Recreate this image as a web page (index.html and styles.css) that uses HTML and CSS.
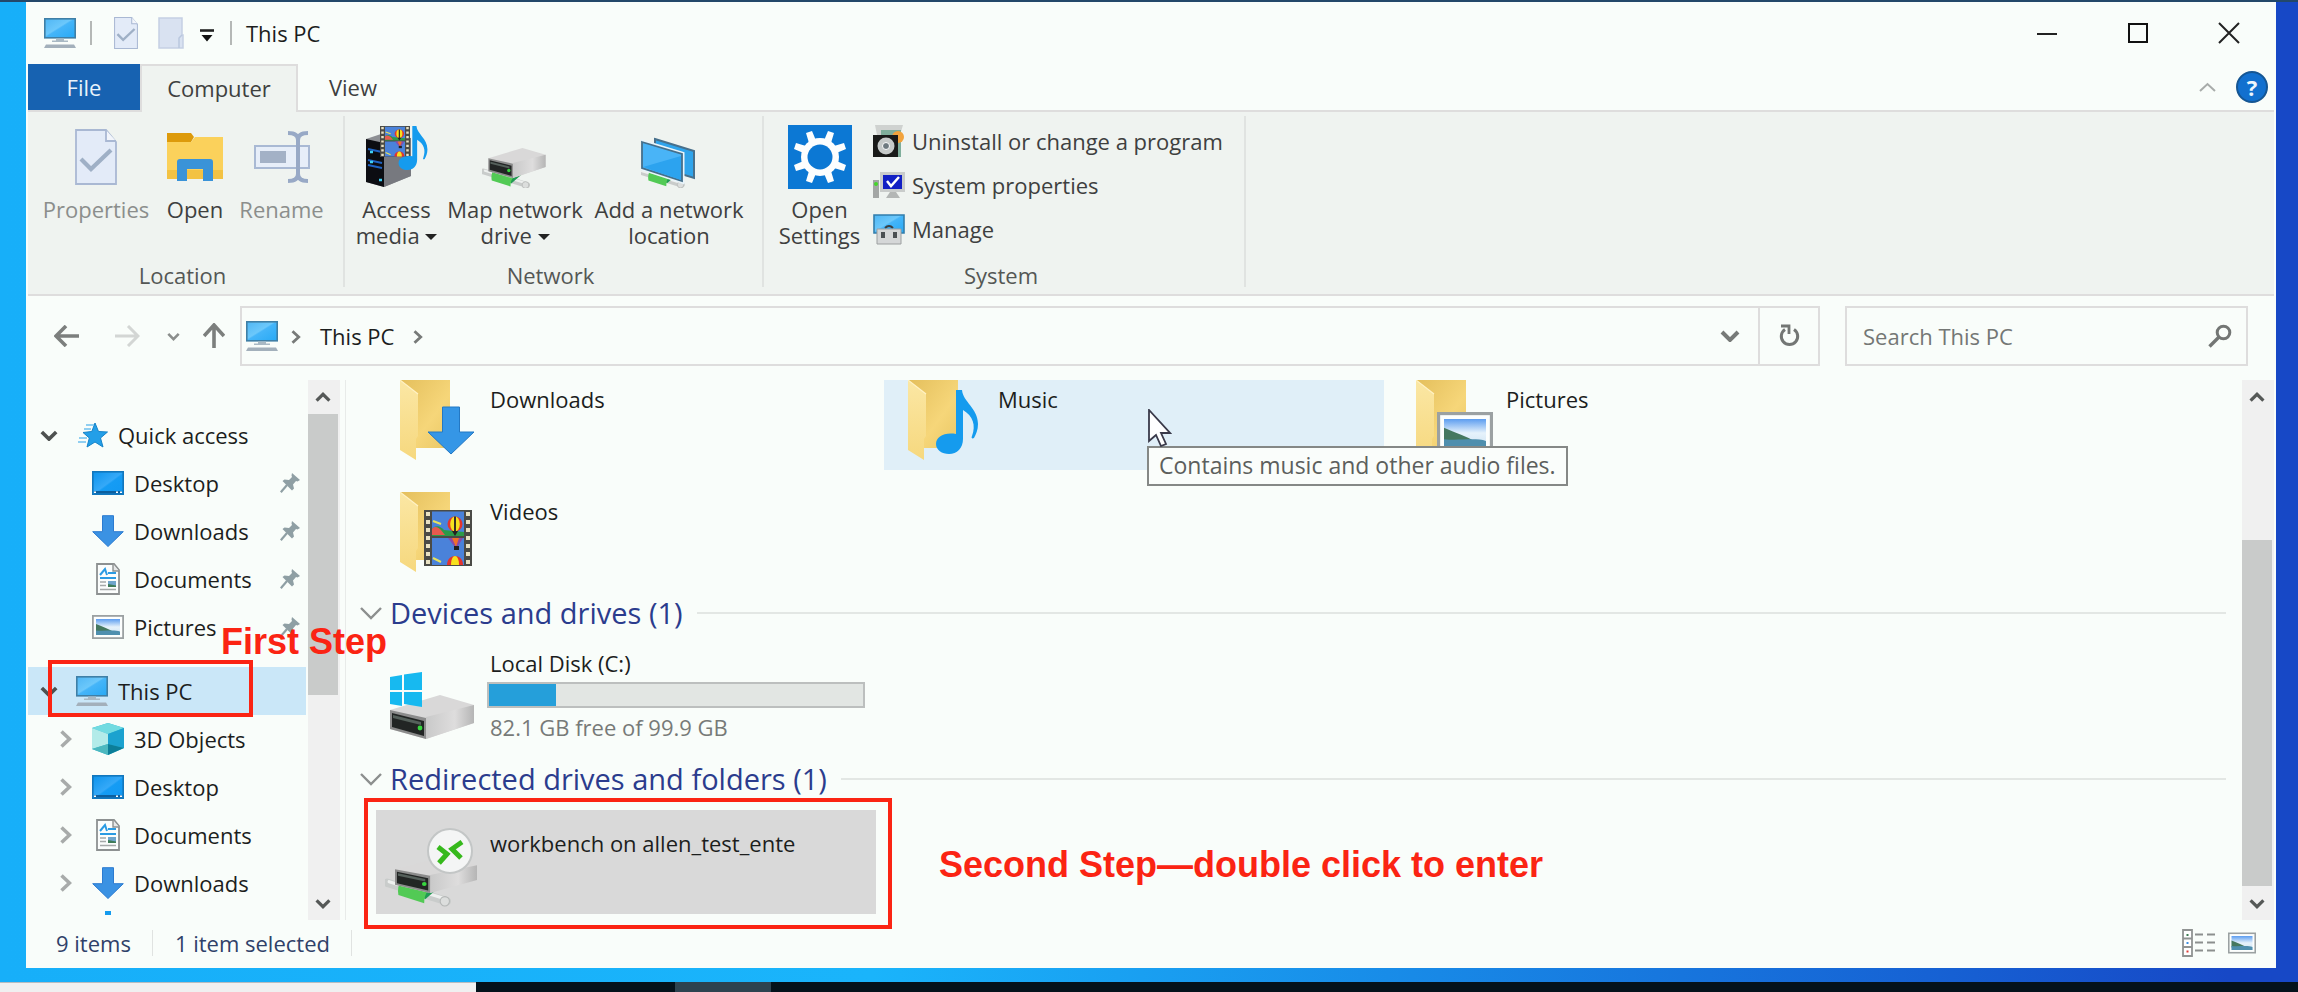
FILE: index.html
```html
<!DOCTYPE html>
<html lang="en">
<head>
<meta charset="utf-8">
<title>This PC</title>
<link rel="stylesheet" href="styles.css">
</head>
<body>
<svg class="defs" aria-hidden="true">
  <defs>
    <linearGradient id="screen" x1="0" y1="0" x2="1" y2="1"><stop offset="0" stop-color="#4fb6f4"/><stop offset=".45" stop-color="#6cc8fb"/><stop offset=".5" stop-color="#45b5f9"/><stop offset="1" stop-color="#27a9f5"/></linearGradient>
    <linearGradient id="desk" x1="0" y1="0" x2="1" y2="1"><stop offset="0" stop-color="#0d93ec"/><stop offset=".5" stop-color="#35a9f8"/><stop offset=".55" stop-color="#159cf4"/><stop offset="1" stop-color="#1198f2"/></linearGradient>
    <linearGradient id="fold" x1="0" y1="0" x2="1" y2="1"><stop offset="0" stop-color="#e4bf5c"/><stop offset=".6" stop-color="#f6d679"/><stop offset="1" stop-color="#e9c765"/></linearGradient>
    <linearGradient id="flap" x1="0" y1="0" x2="0" y2="1"><stop offset="0" stop-color="#fbe7a4"/><stop offset="1" stop-color="#f6d87e"/></linearGradient>
    <linearGradient id="metal" x1="0" y1="0" x2="1" y2="0"><stop offset="0" stop-color="#c9c9c9"/><stop offset=".6" stop-color="#dedddd"/><stop offset="1" stop-color="#b5b5b5"/></linearGradient>
    <linearGradient id="sky" x1="0" y1="0" x2="0" y2="1"><stop offset="0" stop-color="#5c9df0"/><stop offset=".5" stop-color="#e6f2fb"/><stop offset="1" stop-color="#cfe4f3"/></linearGradient>
  </defs>
  <symbol id="i-pc" viewBox="0 0 32 30">
    <rect x=".8" y=".8" width="30.400" height="19" fill="url(#screen)" stroke="#3f7fa6" stroke-width="1.600"/>
    <path d="M12 20.500h8v2h4v1.600H8v-1.600h4z" fill="#a9b9c4"/><path d="M2 26.500h28l2 3.500H0z" fill="#a3b0bb"/>
  </symbol>
  <symbol id="i-desktop" viewBox="0 0 32 24">
    <rect x=".8" y=".8" width="30.400" height="22.400" fill="url(#desk)" stroke="#1277bd" stroke-width="1.600"/>
    <path d="M2 20h28v2.500H2z" fill="#0c5f9e"/><path d="M2 20.500h2v1.500H2zM24 20.500h2v1.500h-2zM28 20.500h2v1.500h-2z" fill="#fff"/>
  </symbol>
  <symbol id="i-down" viewBox="0 0 32 32"><path d="M10.500.7h11v16h9.800L16 31.500.700 16.700h9.800z" fill="#3b92e3" stroke="#2c7bd0"/></symbol>
  <symbol id="i-doc" viewBox="0 0 32 32">
    <path d="M5 1h17l5 6v24H5z" fill="#fbfdfc" stroke="#8d9191" stroke-width="1.800"/><path d="M21 1v7h6" fill="#e6e8e8" stroke="#8d9191" stroke-width="1.400"/>
    <path d="M8 12l5-6 2 6M16 10h8M8 15h16" fill="none" stroke="#2b9be3" stroke-width="2"/><path d="M8 19h6M8 22.500h6M8 26.500h16" stroke="#a5a9a9" stroke-width="1.500"/><path d="M16 18h8v6h-8z" fill="#6fa5cc"/><path d="M16 21l8 1.500V24h-8z" fill="#3f7c58"/>
  </symbol>
  <symbol id="i-pic" viewBox="0 0 32 24">
    <rect x=".9" y=".9" width="30.200" height="22.200" fill="#fcfefd" stroke="#9ba1a2" stroke-width="1.800"/><path d="M4 4h24v16H4z" fill="url(#sky)"/>
    <path d="M4 9c7 3 13 5 18 8H4z" fill="#45785f"/><path d="M4 15.500c8 1 18-1 24 1V20H4z" fill="#4f8fae"/>
  </symbol>
  <symbol id="i-star" viewBox="0 0 30 26">
    <path d="M17 1l3.500 8.500 9 .5-7 6 2.500 9-8-5-8 5 2.300-9L5 10.500l8.800-1z" fill="#239fe8" stroke="#1583c8"/><path d="M8 3h8M6 7h7M1 16h8M0 20h8" stroke="#6fc0ee" stroke-width="1.600"/>
  </symbol>
  <symbol id="i-pin" viewBox="0 0 20 20"><path d="M12 0l8 7-2.500 1.500-1.500-.5-3 3.500 1 4-2 2L2.500 8l2-1.500 4.500.5 3-3-.5-1.500z" fill="#8f9fa4"/><path d="M7 12L.8 19.200" stroke="#8f9fa4" stroke-width="2.200"/></symbol>
  <symbol id="i-cube" viewBox="0 0 32 32">
    <path d="M16 0l16 5v20l-16 7L0 26V5z" fill="#2cb5cf"/><path d="M16 0l16 5-16 6L0 5z" fill="#72dbe1"/><path d="M0 5l16 6v10L0 26z" fill="#b3ebe9"/><path d="M16 11l16-6v20l-16-4z" fill="#1ca2cf"/><path d="M16 21l16 4-16 7z" fill="#0c7e98"/><path d="M16 21L0 26l16 6z" fill="#4cb8bf"/>
  </symbol>
  <symbol id="i-checkdoc" viewBox="0 0 42 56">
    <path d="M1 1h30l10 12v42H1z" fill="#e3ebf8" stroke="#a9b8d3" stroke-width="1.800"/><path d="M31 1v11h10" fill="#f2f5fb" stroke="#a9b8d3" stroke-width="1.800"/><path d="M6 30l10 10 20-19" fill="none" stroke="#9fb0c6" stroke-width="4.200"/>
  </symbol>
  <symbol id="i-vdown" viewBox="0 0 20 12"><path d="M2 2l8 8 8-8" fill="none" stroke="currentColor" stroke-width="4"/></symbol>
  <symbol id="i-vdown-thin" viewBox="0 0 22 14"><path d="M1 2l10 10L21 2" fill="none" stroke="currentColor" stroke-width="2.400"/></symbol>
  <symbol id="i-vright" viewBox="0 0 12 18"><path d="M1.500 1.500L9.500 9l-8 7.500" fill="none" stroke="currentColor" stroke-width="3.600"/></symbol>
  <symbol id="i-folder" viewBox="0 0 52 80">
    <path d="M0 0h50v68H14z" fill="url(#fold)"/><path d="M0 0l18 14v42l-2 3v21L0 70z" fill="url(#flap)"/><path d="M0 0l18 14" stroke="#fff2c4" stroke-width="1.200"/>
  </symbol>
  <symbol id="i-film" viewBox="0 0 48 56">
    <path d="M0 0h48v56H0z" fill="#4b4b46"/><path d="M4 2v54M44 2v54" stroke="#e9e2c4" stroke-width="4" stroke-dasharray="4 4"/>
    <path d="M8 1.500h32v24H8zM8 28h32v27H8z" fill="#4a82da"/><path d="M8 19c5-5 9-2 12 1l20 2v4H8z" fill="#2c9a48"/><path d="M8 19c3-4 7-1 9 1l4 5H8z" fill="#e65a4e"/>
    <circle cx="31" cy="14" r="7.500" fill="#e3342d"/><ellipse cx="31" cy="14" rx="4.800" ry="7.500" fill="#f6e11e"/><path d="M31 6.500v15" stroke="#3b3023" stroke-width="2"/><path d="M28 21l3 5 3-5z" fill="#222"/>
    <path d="M24 28h15l-5 8h-4z" fill="#8b4aa8"/><path d="M28 28h7l-3 9z" fill="#f0702a"/><path d="M30 36h5v4h-5z" fill="#202020"/>
    <path d="M23 55c0-12 16-12 16 0z" fill="#e3342d"/><path d="M27 55c0-12 8-12 8 0z" fill="#f6e11e"/><path d="M9 11l8 3M9 48l8 4" stroke="#e8e25c" stroke-width="2"/>
  </symbol>
  <symbol id="i-note" viewBox="0 0 42 64"><path d="M20 0h6c1 12 16 18 16 34 0 6-2 10-4 14-2 1-3 0-2-2 4-11 1-20-9-26v29c0 9-6 15-14 15-7 0-13-4-13-10 0-7 8-12 20-10z" fill="#159bee"/></symbol>
  <symbol id="i-drive" viewBox="0 0 84 44">
    <path d="M0 15L50 0l34 10v18L36 44 0 34z" fill="#d9d8d8"/><path d="M36 22l48-12v18L36 44z" fill="url(#metal)"/><path d="M0 15l36 8v21L0 34z" fill="#8c8c8c"/><path d="M2 18l32 8v15L2 32z" fill="#222524"/><path d="M3 20l28 7v3L3 23z" fill="#55605b"/><circle cx="30" cy="33" r="2.400" fill="#37d63f"/>
  </symbol>
  <symbol id="i-cable" viewBox="0 0 64 28">
    <path d="M2 4l58 18" stroke="#c9cccb" stroke-width="8" stroke-linecap="round"/><path d="M4 3l56 17" stroke="#eef0ef" stroke-width="3" stroke-linecap="round"/><path d="M30 12l20-8 3 4-14 12z" fill="#219a53"/><path d="M15 2l27 9c-3 4-4 8-4 13L13 16c-1-5 0-10 2-14z" fill="#52ca55"/><path d="M15 4l26 8" stroke="#8be78a" stroke-width="2.500"/><circle cx="58" cy="22" r="4.500" fill="#dcdedd" stroke="#b4b7b6"/>
  </symbol>
</svg>

<main class="window">
  <header class="titlebar">
    <svg class="pc"><use href="#i-pc"/></svg>
    <span class="sep sep-first"></span>
    <button class="qa" aria-label="Properties"><svg class="qa-doc"><use href="#i-checkdoc"/></svg></button>
    <button class="qa" aria-label="New folder"><svg width="26" height="32" viewBox="0 0 26 32"><path d="M1 1h23v17h1v13H1z" fill="#d9e2f1" stroke="#c5d0e3" stroke-width="1.500"/><path d="M21 31V21l3-3" fill="none" stroke="#b9c7de" stroke-width="1.500"/></svg></button>
    <button class="qa-more" aria-label="Customize toolbar"><svg width="14" height="13" viewBox="0 0 14 13"><path d="M0 1.500h14" stroke="#222" stroke-width="2.600"/><path d="M1.500 6h11L7 12.500z" fill="#111"/></svg></button>
    <span class="sep"></span>
    <h1>This PC</h1>
    <div class="caption">
      <button aria-label="Minimize"><svg width="22" height="22" viewBox="0 0 22 22"><path d="M1 12h20" stroke="#222" stroke-width="2"/></svg></button>
      <button aria-label="Maximize"><svg width="22" height="22" viewBox="0 0 22 22"><path d="M2 2h18v18H2z" fill="none" stroke="#111" stroke-width="2"/></svg></button>
      <button aria-label="Close"><svg width="22" height="22" viewBox="0 0 22 22"><path d="M1 1l20 20M21 1L1 21" stroke="#222" stroke-width="2"/></svg></button>
    </div>
  </header>

  <nav class="tabs">
    <button class="tab tab-file">File</button>
    <button class="tab tab-on">Computer</button>
    <button class="tab tab-view">View</button>
    <span class="tab-tools">
      <button aria-label="Collapse ribbon"><svg width="17" height="10" viewBox="0 0 17 10"><path d="M1 9l7.500-7L16 9" fill="none" stroke="#a8acaa" stroke-width="2"/></svg></button>
      <button class="help" aria-label="Help">?</button>
    </span>
  </nav>

  <section class="ribbon">
    <div class="group">
      <div class="tools">
        <button class="tool w-l dim"><span class="pict"><svg width="42" height="56"><use href="#i-checkdoc"/></svg></span>Properties</button>
        <button class="tool w-s"><span class="pict"><svg width="56" height="50" viewBox="0 0 56 50"><path d="M0 1h24l3 4-3 5H0z" fill="#dd9a0b"/><path d="M0 10h24l4-5h28v42H0z" fill="#fbd15b"/><path d="M0 38h56v9H0z" fill="#f3c243"/><path d="M10 49V30q0-3 3-3h30q3 0 3 3v19H36V37H20v12z" fill="#3a93d8"/></svg></span>Open</button>
        <button class="tool w-m dim"><span class="pict"><svg width="56" height="54" viewBox="0 0 56 54"><path d="M1 16h54v22H1z" fill="#e7eef9" stroke="#a9b9d4" stroke-width="2"/><path d="M6 21h26v12H6z" fill="#a3b1c6"/><path d="M34 3c6 0 10 2 10 7v34c0 5-4 7-10 7M54 3c-6 0-10 2-10 7v34c0 5 4 7 10 7" fill="none" stroke="#98a9c6" stroke-width="4"/></svg></span>Rename</button>
      </div>
      <h2>Location</h2>
    </div>
    <div class="group group-network">
      <div class="tools">
        <button class="tool w-m"><span class="pict"><svg width="62" height="62" viewBox="0 0 62 62"><path d="M0 13l18-6 27 5v38L18 61 0 56z" fill="#8d8f94"/><path d="M0 13l18 4v44L0 56z" fill="#0c0d12"/><path d="M18 17l27-5v38L18 61z" fill="#77797f"/><path d="M2 23l14 3M2 34l14 3M2 39l14 3" stroke="#1f63c4" stroke-width="2"/><path d="M4 26h3M4 36h3M13 54h3" stroke="#3ed0f5" stroke-width="2.500"/><svg x="14" y="0" width="30" height="31" preserveAspectRatio="none" viewBox="0 0 48 56"><use href="#i-film" width="48" height="56"/></svg><svg x="32" y="0" width="30" height="44"><use href="#i-note"/></svg></svg></span><span>Access<br>media <i class="caret"></i></span></button>
        <button class="tool w-xl"><span class="pict"><svg width="66" height="62" viewBox="0 0 66 62"><svg x="0" y="42" width="48" height="22"><use href="#i-cable"/></svg><svg x="6" y="22" width="58" height="30"><use href="#i-drive"/></svg></svg></span><span>Map network<br>drive <i class="caret"></i></span></button>
        <button class="tool w-xxl"><span class="pict"><svg width="56" height="62" viewBox="0 0 56 62"><svg x="-2" y="43" width="46" height="20"><use href="#i-cable"/></svg><path d="M14 13l39 12v27L14 40z" fill="#2fa4ec" stroke="#48708c" stroke-width="2"/><path d="M1 16l40 12v27L1 42z" fill="#49b4f7" stroke="#e9f4fa" stroke-width="5"/><path d="M1 16l40 12v27L1 42z" fill="#49b4f7" stroke="#456f8b" stroke-width="1.800"/><path d="M2 41L40 30v24z" fill="#2ca3ef"/></svg></span><span>Add a network<br>location</span></button>
      </div>
      <h2>Network</h2>
    </div>
    <div class="group group-system">
      <div class="tools">
        <button class="tool w-m"><span class="pict"><svg width="64" height="64" viewBox="0 0 64 64"><path d="M0 0h64v64H0z" fill="#0c78d4"/><g fill="#fdfefe"><circle cx="32" cy="32" r="19"/><path d="M18 8l6-2 5 12h-8zM46 8l-6-2-5 12h8zM18 56l6 2 5-12h-8zM46 56l-6 2-5-12h8zM8 18l-2 6 12 5v-8zM8 46l-2-6 12-5v8zM56 18l2 6-12 5v-8zM56 46l2-6-12-5v8z"/></g><circle cx="32" cy="32" r="12.500" fill="#0c78d4"/></svg></span><span>Open<br>Settings</span></button>
        <div class="links">
          <button><svg width="32" height="32" viewBox="0 0 32 32"><path d="M2 0h28l-3 10v22H4V10z" fill="#cfd2d0"/><path d="M8 5h20v27H8z" fill="#7fae9b"/><circle cx="25" cy="12" r="6" fill="#f2a33c"/><path d="M0 10h25v22H0z" fill="#191a19"/><circle cx="13" cy="21" r="8.500" fill="#c6cac9"/><circle cx="13" cy="21" r="3.500" fill="#6e7a80" stroke="#fff"/></svg>Uninstall or change a program</button>
          <button><svg width="32" height="32" viewBox="0 0 32 32"><path d="M7 3h25v20H7z" fill="#c9cccb"/><path d="M10 6h19v14H10z" fill="#1220c4"/><path d="M14 12l4 5 8-9" fill="none" stroke="#fff" stroke-width="2.500"/><path d="M17 23h6l4 6H13z" fill="#b3b6b5"/><path d="M0 11h6v18H0z" fill="#a3a6a5"/><circle cx="3" cy="15" r="2" fill="#44d62a"/></svg>System properties</button>
          <button><svg width="32" height="32" viewBox="0 0 32 32"><path d="M1 2h30v18H1z" fill="url(#screen)" stroke="#327eac" stroke-width="1.600"/><path d="M12 15q4-4 8 0" fill="none" stroke="#3c3f42" stroke-width="2"/><path d="M4 16h24v15H4z" fill="#d5d7d8" stroke="#9c9fa0"/><path d="M8 19h4v6H8zM20 19h4v6h-4z" fill="#4b5053"/></svg>Manage</button>
        </div>
      </div>
      <h2>System</h2>
    </div>
  </section>

  <div class="addressrow">
    <button class="nav-back" aria-label="Back"><svg width="26" height="22" viewBox="0 0 26 22"><path d="M25 11H3M12 1L2 11l10 10" fill="none" stroke="#7c7f7d" stroke-width="3.600"/></svg></button>
    <button class="nav-fwd" aria-label="Forward"><svg width="26" height="22" viewBox="0 0 26 22"><path d="M1 11h22M14 1l10 10-10 10" fill="none" stroke="#d3d6d4" stroke-width="3"/></svg></button>
    <button class="nav-recent" aria-label="Recent"><svg width="13" height="9"><use href="#i-vdown"/></svg></button>
    <button class="nav-up" aria-label="Up"><svg width="22" height="26" viewBox="0 0 22 26"><path d="M11 25V3M1 13L11 2l10 11" fill="none" stroke="#7c7f7d" stroke-width="3.600"/></svg></button>
    <div class="address">
      <svg class="pc"><use href="#i-pc"/></svg>
      <svg class="crumb"><use href="#i-vright"/></svg>
      <a href="#this-pc">This PC</a>
      <svg class="crumb"><use href="#i-vright"/></svg>
      <button class="addr-drop" aria-label="Previous locations"><svg width="20" height="12"><use href="#i-vdown"/></svg></button>
      <button class="addr-refresh" aria-label="Refresh"><svg width="24" height="24" viewBox="0 0 24 24"><path d="M17 5.500a8.200 8.200 0 1 1-9 0" fill="none" stroke="#737674" stroke-width="3"/><path d="M4 2h8v8" fill="none" stroke="#737674" stroke-width="2.800"/></svg></button>
    </div>
    <label class="search">
      <input type="text" aria-label="Search This PC" placeholder="Search This PC">
      <svg width="24" height="24" viewBox="0 0 24 24"><circle cx="15.500" cy="8.500" r="6.300" fill="none" stroke="#737674" stroke-width="3"/><path d="M11 13L1.500 22.500" stroke="#737674" stroke-width="3.400"/></svg>
    </label>
  </div>

  <div class="body">
    <aside class="sidebar">
      <ul class="tree">
        <li class="top"><svg class="tw"><use href="#i-vdown"/></svg><svg class="ic-star"><use href="#i-star"/></svg>Quick access</li>
        <li><svg class="ic"><use href="#i-desktop"/></svg>Desktop<svg class="pin"><use href="#i-pin"/></svg></li>
        <li><svg class="ic"><use href="#i-down"/></svg>Downloads<svg class="pin"><use href="#i-pin"/></svg></li>
        <li><svg class="ic"><use href="#i-doc"/></svg>Documents<svg class="pin"><use href="#i-pin"/></svg></li>
        <li><svg class="ic"><use href="#i-pic"/></svg>Pictures<svg class="pin"><use href="#i-pin"/></svg></li>
        <li class="top current" id="this-pc"><svg class="tw"><use href="#i-vdown"/></svg><svg class="pc"><use href="#i-pc"/></svg>This PC
          <span class="mark mark-first"></span><strong class="step step-first">First Step</strong></li>
        <li><svg class="tw-r"><use href="#i-vright"/></svg><svg class="ic"><use href="#i-cube"/></svg>3D Objects</li>
        <li><svg class="tw-r"><use href="#i-vright"/></svg><svg class="ic"><use href="#i-desktop"/></svg>Desktop</li>
        <li><svg class="tw-r"><use href="#i-vright"/></svg><svg class="ic"><use href="#i-doc"/></svg>Documents</li>
        <li><svg class="tw-r"><use href="#i-vright"/></svg><svg class="ic"><use href="#i-down"/></svg>Downloads</li>
        <li class="peek"><svg width="6" height="4"><rect width="6" height="4" fill="#159bee"/></svg></li>
      </ul>
      <div class="scroll scroll-side">
        <button aria-label="Scroll up"><svg class="flip"><use href="#i-vdown"/></svg></button>
        <span class="thumb"></span>
        <button aria-label="Scroll down"><svg><use href="#i-vdown"/></svg></button>
      </div>
    </aside>

    <section class="content">
      <div class="files">
        <div class="grid grid-top">
          <div class="tile"><svg class="big" viewBox="0 0 96 96"><svg x="15" y="10" width="52" height="80"><use href="#i-folder"/></svg><svg x="42" y="36" width="48" height="49" viewBox="0 0 48 49"><path d="M15.500 1h17v25H47L24 48 1 26h14.500z" fill="#3596e6" stroke="#2378c4"/></svg></svg><span>Downloads</span></div>
          <div class="tile hover"><svg class="big" viewBox="0 0 96 96"><svg x="15" y="10" width="52" height="80"><use href="#i-folder"/></svg><svg x="43" y="20" width="42" height="64"><use href="#i-note"/></svg></svg><span>Music</span>
            <div class="tooltip">Contains music and other audio files.</div>
            <svg class="cursor" viewBox="0 0 24 38"><path d="M1 1v31l7-6 5 11 5-2-5-11h9z" fill="#fff" stroke="#3a3a4a" stroke-width="1.800"/></svg>
          </div>
          <div class="tile"><svg class="big" viewBox="0 0 96 96"><svg x="15" y="10" width="52" height="80"><use href="#i-folder"/></svg><svg x="36" y="42" width="56" height="42"><use href="#i-pic"/></svg></svg><span>Pictures</span></div>
          <div class="tile"><svg class="big" viewBox="0 0 96 96"><svg x="15" y="10" width="52" height="80"><use href="#i-folder"/></svg><svg x="39" y="28" width="48" height="56"><use href="#i-film"/></svg></svg><span>Videos</span></div>
        </div>
        <h2 class="section"><svg><use href="#i-vdown-thin"/></svg>Devices and drives (1)</h2>
        <div class="grid">
          <div class="tile drive"><svg class="big" viewBox="0 0 96 96"><svg x="5" y="47" width="84" height="44"><use href="#i-drive"/></svg><path d="M5 29l12-2v15H5zM19 26.500L37 24v18H19zM5 44h12v14L5 56zM19 44h18v15l-18-3z" fill="#17b9f0"/></svg>
            <div class="info"><span>Local Disk (C:)</span><div class="usage"><div class="used" style="width:18%"></div></div><span class="sub">82.1 GB free of 99.9 GB</span></div></div>
        </div>
        <h2 class="section"><svg><use href="#i-vdown-thin"/></svg>Redirected drives and folders (1)</h2>
        <div class="grid">
          <div class="tile selected"><svg class="big" viewBox="0 0 96 96"><svg x="0" y="64" width="66" height="30"><use href="#i-cable"/></svg><svg x="10" y="43" width="82" height="36" preserveAspectRatio="none" viewBox="0 0 84 44"><use href="#i-drive" width="84" height="44"/></svg><circle cx="65" cy="37" r="22" fill="#f4f5f5" stroke="#c3c6c6" stroke-width="2"/><path d="M53 33l9 7-8 9M77 28l-10 7 9 9" fill="none" stroke="#36b91c" stroke-width="5"/></svg><span>workbench on allen_test_ente</span>
            <span class="mark mark-second"></span><strong class="step step-second">Second Step—double click to enter</strong></div>
        </div>
      </div>
      <div class="scroll scroll-main">
        <button aria-label="Scroll up"><svg class="flip"><use href="#i-vdown"/></svg></button>
        <span class="thumb"></span>
        <button aria-label="Scroll down"><svg><use href="#i-vdown"/></svg></button>
      </div>
    </section>
  </div>

  <footer class="status">
    <span>9 items</span><span>1 item selected</span>
    <div class="views">
      <button aria-label="Details view"><svg width="34" height="28" viewBox="0 0 34 28"><path d="M1 1h9v26H1zM1 9.500h9M1 18h9" fill="#fff" stroke="#909392" stroke-width="1.800"/><path d="M13 5.500h8M25 5.500h8M13 13.500h8M25 13.500h8M13 21.500h8M25 21.500h8" stroke="#8c8f8e" stroke-width="2"/><path d="M4.500 5h2v2h-2z" fill="#3b7a50"/><path d="M4.500 13h2v2h-2z" fill="#3c8ee0"/><path d="M4.500 21.500h2v2h-2z" fill="#dd3a35"/></svg></button>
      <button aria-label="Large icons view"><svg width="28" height="22"><use href="#i-pic"/></svg></button>
    </div>
  </footer>
</main>
<div class="taskbar"><span class="task-search"></span><span class="task-active"></span></div>
</body>
</html>
```
FILE: styles.css
```css
* { box-sizing: border-box; }

body {
  margin: 0;
  height: 100vh;
  display: flex;
  flex-direction: column;
  overflow: hidden;
  border-top: 2px solid #23486a;
  background: linear-gradient(90deg, #17aff9 0, #1ab4fb 38%, #1660d3 85%, #1748c6 97%);
  font-family: "Open Sans", "Noto Sans", sans-serif;
  font-size: 22px;
  line-height: 26px;
  color: #1c1e1d;
}

button {
  border: 0;
  padding: 0;
  background: none;
  font: inherit;
  color: inherit;
  display: inline-flex;
  align-items: center;
  justify-content: center;
}

h1, h2 { margin: 0; font-size: 22px; font-weight: 400; }
svg { flex: none; display: block; }
.defs { position: absolute; width: 0; height: 0; }
.pc { width: 32px; height: 30px; }

.window {
  flex: 1;
  min-height: 0;
  margin: 0 22px 14px 26px;
  padding: 0 2px;
  display: flex;
  flex-direction: column;
  background: #f9fdfa;
}

/* Title bar */
.titlebar { height: 62px; display: flex; align-items: center; padding-left: 16px; }
.sep { width: 2px; height: 24px; background: #b5b8b6; }
.sep-first { margin: 0 22px 0 14px; }
.qa { margin-right: 20px; }
.qa-doc { width: 24px; height: 32px; }
.qa-more { margin: 4px 16px 0 -4px; }
.titlebar h1 { margin-left: 14px; }
.caption { margin-left: auto; display: flex; }
.caption button { width: 91px; height: 60px; }

/* Tabs */
.tabs { height: 48px; display: flex; align-items: stretch; border-bottom: 2px solid #dedddd; }
.tab { color: #3e403f; }
.tab-file { width: 112px; background: #1762b1; color: #e9f3fb; }
.tab-on { width: 158px; background: #eff3f0; border: 2px solid #dedddd; border-bottom: 0; margin-bottom: -2px; padding-bottom: 2px; }
.tab-view { width: 110px; }
.tab-tools { margin-left: auto; display: flex; align-items: center; gap: 20px; padding-right: 6px; }
.help { width: 32px; height: 32px; border-radius: 50%; background: #1270cf; border: 2px solid #155693; color: #eef6fd; font-weight: 700; }

/* Ribbon */
.ribbon { height: 184px; display: flex; padding: 4px 0 7px; background: #eff3f0; border-bottom: 2px solid #dedddd; color: #3e403f; }
.group { display: flex; flex-direction: column; justify-content: space-between; padding: 9px 14px 0 8px; border-right: 2px solid #e0e3e1; }
.group-network { padding: 9px 10px 0 4px; }
.group h2 { text-align: center; color: #545755; line-height: 24px; }
.tools { display: flex; align-items: flex-start; }
.tool { flex-direction: column; justify-content: flex-start; white-space: nowrap; }
.pict { height: 64px; display: flex; align-items: center; margin-bottom: 7px; }
.w-s { width: 78px; }
.w-m { width: 95px; }
.w-l { width: 120px; }
.w-xl { width: 142px; }
.w-xxl { width: 166px; }
.dim { color: #8b8e8c; }
.caret { display: inline-block; vertical-align: 4px; border: 6px solid transparent; border-top-color: #222; border-bottom: 0; }
.group-system { width: 482px; }
.links { display: flex; flex-direction: column; gap: 12px; margin-left: 6px; }
.links button { justify-content: flex-start; gap: 7px; height: 32px; white-space: nowrap; }

/* Address row */
.addressrow { height: 84px; display: flex; align-items: center; padding: 10px 26px 14px; }
.nav-fwd { margin-left: 34px; }
.nav-recent { margin: 0 23px 0 27px; color: #8b8e8c; }
.nav-up { margin-right: 15px; }
.address { flex: 1; height: 60px; display: flex; align-items: center; border: 2px solid #dedddd; padding-left: 4px; color: #777a78; }
.address a { color: #1c1e1d; text-decoration: none; margin: 0 18px; }
.crumb { width: 12px; height: 14px; margin-top: 2px; }
.address .pc { margin-right: 12px; }
.addr-drop { margin-left: auto; width: 56px; height: 56px; }
.addr-refresh { width: 60px; height: 56px; border-left: 2px solid #dedddd; }
.search { width: 403px; height: 60px; margin-left: 25px; display: flex; align-items: center; border: 2px solid #dedddd; padding: 0 14px 0 16px; }
.search input { flex: 1; min-width: 0; border: 0; padding: 0; background: none; font: inherit; outline: 0; }
.search input::placeholder { color: #747775; opacity: 1; }

/* Body */
.body { flex: 1; min-height: 0; display: flex; }
.sidebar { position: relative; z-index: 2; display: flex; width: 318px; border-right: 1px solid #e8ebe9; }
.tree { list-style: none; width: 278px; margin: 0 2px 0 0; padding: 31px 0 0; }
.tree li { position: relative; height: 48px; display: flex; align-items: center; padding-left: 32px; white-space: nowrap; }
.tree li.top { padding-left: 12px; }
.tree .current { margin-top: 16px; background: #cae7f8; }
.ic { width: 32px; height: 32px; margin: 0 10px 0 32px; }
.tw { width: 18px; height: 11px; margin-right: 18px; color: #4e5150; }
.tw-r { width: 12px; height: 18px; color: #a8abaa; }
.tw-r + .ic { margin-left: 20px; }
.ic-star { width: 30px; height: 26px; margin: 0 10px 0 2px; }
.tree .pc { margin-right: 10px; }
.pin { width: 20px; height: 20px; margin: 0 6px 0 auto; }
.tree .peek { height: 12px; padding: 0 0 0 77px; }

.scroll { width: 32px; display: flex; flex-direction: column; background: #f0f0f0; color: #555857; }
.scroll button { width: 30px; height: 34px; }
.scroll svg { width: 16px; height: 11px; }
.flip { transform: rotate(180deg); }
.thumb { width: 30px; background: #c9cbca; }
.scroll-side .thumb { flex: 0 0 52%; margin-bottom: auto; }
.scroll-main .thumb { flex: 0 0 64%; margin-top: auto; }

.content { flex: 1; min-width: 0; display: flex; }
.files { flex: 1; min-width: 0; padding: 0 16px 0 14px; clip-path: inset(0 0 -20px 0); }
.grid { display: grid; grid-template-columns: repeat(3, 500px); gap: 8px; padding-left: 16px; }
.grid-top { margin-top: -14px; }
.tile { position: relative; height: 104px; display: flex; padding-left: 9px; }
.tile > span:first-of-type { margin-top: 18px; line-height: 30px; }
.big { width: 96px; height: 96px; margin: 4px 9px 0 0; }
.hover { background: #e0eff8; }
.selected { background: #d9d9d9; }
.info { display: flex; flex-direction: column; line-height: 26px; padding-top: 6px; }
.usage { width: 378px; height: 26px; margin: 6px 0 6px -3px; border: 2px solid #bcbfbe; background: #e2e6e3; }
.used { height: 100%; background: #259fda; }
.sub { color: #777a78; }

.section { height: 62px; display: flex; align-items: center; gap: 8px; font-size: 29px; color: #2b3c8d; white-space: nowrap; }
.section svg { width: 22px; height: 14px; color: #8c8f8e; }
.section::after { content: ""; flex: 1; height: 2px; margin-left: 6px; background: #e3e7e4; }

.tooltip { position: absolute; z-index: 3; left: 263px; top: 80px; height: 40px; padding: 0 10px; font-size: 23px; line-height: 34px; white-space: nowrap; color: #5c5f5d; background: #fafdfb; border: 2px solid #858886; }
.cursor { position: absolute; z-index: 4; left: 264px; top: 43px; width: 24px; height: 38px; }

/* Red walkthrough marks */
.mark { position: absolute; z-index: 3; border: 4px solid #fb2413; }
.mark-first { left: 20px; top: -7px; width: 205px; height: 57px; }
.mark-second { left: -12px; top: -12px; width: 528px; height: 131px; }
.step { position: absolute; z-index: 3; font: 700 36px/40px "Liberation Sans", Arial, sans-serif; color: #fb2413; white-space: nowrap; }
.step-first { left: 193px; top: -45px; }
.step-second { left: 563px; top: 35px; }

/* Status bar */
.status { height: 48px; display: flex; align-items: center; padding: 0 18px 2px 28px; color: #2f4169; }
.status > span { padding-right: 21px; margin-right: 22px; border-right: 1px solid #e0e3e1; }
.views { margin-left: auto; display: flex; gap: 12px; }

/* Taskbar */
.taskbar { height: 10px; display: flex; background: #04121b; }
.task-search { width: 476px; background: #f0f0f0; border-top: 1px solid #b7bcc0; }
.task-active { width: 96px; margin-left: 199px; background: #2d4350; }
```
